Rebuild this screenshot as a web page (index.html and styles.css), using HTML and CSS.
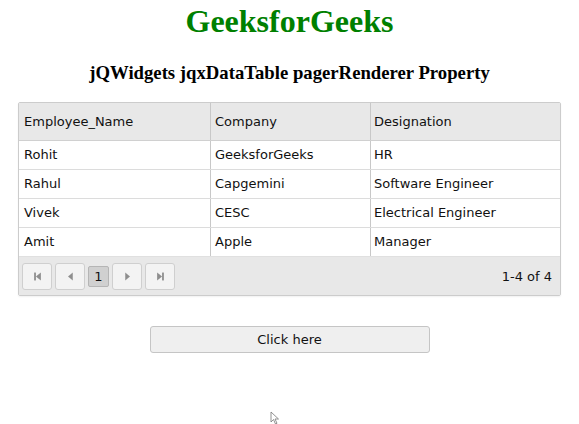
FILE: index.html
```html
<!DOCTYPE html>
<html>
<head>
<meta charset="utf-8">
<link rel="stylesheet" href="styles.css">
</head>
<body>
<h1 class="title">GeeksforGeeks</h1>
<h3 class="subtitle">jQWidgets jqxDataTable pagerRenderer Property</h3>
<div class="grid">
  <div class="row head">
    <div class="cell c1">Employee_Name</div>
    <div class="cell c2">Company</div>
    <div class="cell c3">Designation</div>
  </div>
  <div class="row">
    <div class="cell c1">Rohit</div>
    <div class="cell c2">GeeksforGeeks</div>
    <div class="cell c3">HR</div>
  </div>
  <div class="row">
    <div class="cell c1">Rahul</div>
    <div class="cell c2">Capgemini</div>
    <div class="cell c3">Software Engineer</div>
  </div>
  <div class="row">
    <div class="cell c1">Vivek</div>
    <div class="cell c2">CESC</div>
    <div class="cell c3">Electrical Engineer</div>
  </div>
  <div class="row last">
    <div class="cell c1">Amit</div>
    <div class="cell c2">Apple</div>
    <div class="cell c3">Manager</div>
  </div>
  <div class="pager">
    <div class="btns">
      <span class="pbtn"><svg width="9" height="9" viewBox="0 0 8 8"><rect x="1" y="0.5" width="1.6" height="7" fill="#8e8e8e"/><path d="M7 0.5 L2.6 4 L7 7.5 Z" fill="#8e8e8e"/></svg></span>
      <span class="pbtn"><svg width="9" height="9" viewBox="0 0 8 8"><path d="M6 0.5 L1.8 4 L6 7.5 Z" fill="#8e8e8e"/></svg></span>
      <span class="pnum">1</span>
      <span class="pbtn"><svg width="9" height="9" viewBox="0 0 8 8"><path d="M2 0.5 L6.2 4 L2 7.5 Z" fill="#8e8e8e"/></svg></span>
      <span class="pbtn"><svg width="9" height="9" viewBox="0 0 8 8"><path d="M1 0.5 L5.4 4 L1 7.5 Z" fill="#8e8e8e"/><rect x="5.4" y="0.5" width="1.6" height="7" fill="#8e8e8e"/></svg></span>
    </div>
    <div class="pinfo">1-4 of 4</div>
  </div>
</div>
<div class="btnwrap"><button class="click">Click here</button></div>
<svg class="cursor" width="10" height="14" viewBox="0 0 10 14"><path d="M1 1 L1 11 L3.5 8.5 L5.5 13 L7 12.3 L5 8 L8.5 8 Z" fill="#fff" stroke="#777" stroke-width="0.8"/></svg>
</body>
</html>
```
FILE: styles.css
```css
html, body { margin: 0; padding: 0; background: #fff; }
body { position: relative; width: 579px; height: 424px; overflow: hidden; font-family: "Liberation Serif", serif; }
.title {
  margin: 3px 0 0 0;
  text-align: center;
  color: #008000;
  font-size: 32px;
  font-weight: bold;
  line-height: 37px;
}
.subtitle {
  margin: 22px 0 0 0;
  text-align: center;
  font-size: 18.72px;
  font-weight: bold;
  line-height: 22px;
  color: #000;
}
.grid {
  margin: 18px 0 0 18px;
  width: 541px;
  border: 1px solid #cccccc;
  border-radius: 2px;
  font-family: "DejaVu Sans", Verdana, sans-serif;
  font-size: 13px;
  color: #111;
  box-shadow: 0 1px 2px rgba(0,0,0,0.06);
}
.row { display: flex; height: 28px; border-bottom: 1px solid #dcdcdc; background: #fff; }
.row.head { height: 37px; background: #e8e8e8; border-bottom: 1px solid #d0d0d0; }
.row.last { border-bottom: none; }
.cell { display: flex; align-items: center; padding-left: 5px; padding-bottom: 2px; box-sizing: border-box; }
.row.head .cell { padding-bottom: 0; }
.c1 { width: 192px; border-right: 1px solid #c8c8c8; }
.c2 { width: 160px; border-right: 1px solid #c8c8c8; padding-left: 4px; }
.c3 { flex: 1; padding-left: 3px; }
.pager {
  height: 39px;
  background: #e8e8e8;
  display: flex;
  align-items: center;
  justify-content: space-between;
  padding: 0 8px 0 3px;
  border-top: 1px solid #e0e0e0;
  box-sizing: border-box;
}
.btns { display: flex; align-items: center; gap: 3px; margin-top: 1px; }
.pbtn {
  width: 28px; height: 25px;
  border: 1px solid #cfcfcf;
  border-radius: 3px;
  background: #f3f3f3;
  display: flex; align-items: center; justify-content: center;
}
.pnum {
  width: 19px; height: 19px;
  border: 1px solid #b5b5b5;
  border-radius: 2px;
  background: #d0d0d0;
  display: flex; align-items: center; justify-content: center;
  font-size: 13px;
}
.pinfo { color: #111; }
.btnwrap { margin-top: 30px; display: flex; justify-content: center; }
.click {
  width: 280px; height: 27px;
  border: 1px solid #c5c5c5;
  border-radius: 3px;
  background: #efefef;
  font-family: "DejaVu Sans", Verdana, sans-serif;
  font-size: 13px;
  color: #111;
  padding: 0;
}
.cursor { position: absolute; left: 270px; top: 411px; }
```
